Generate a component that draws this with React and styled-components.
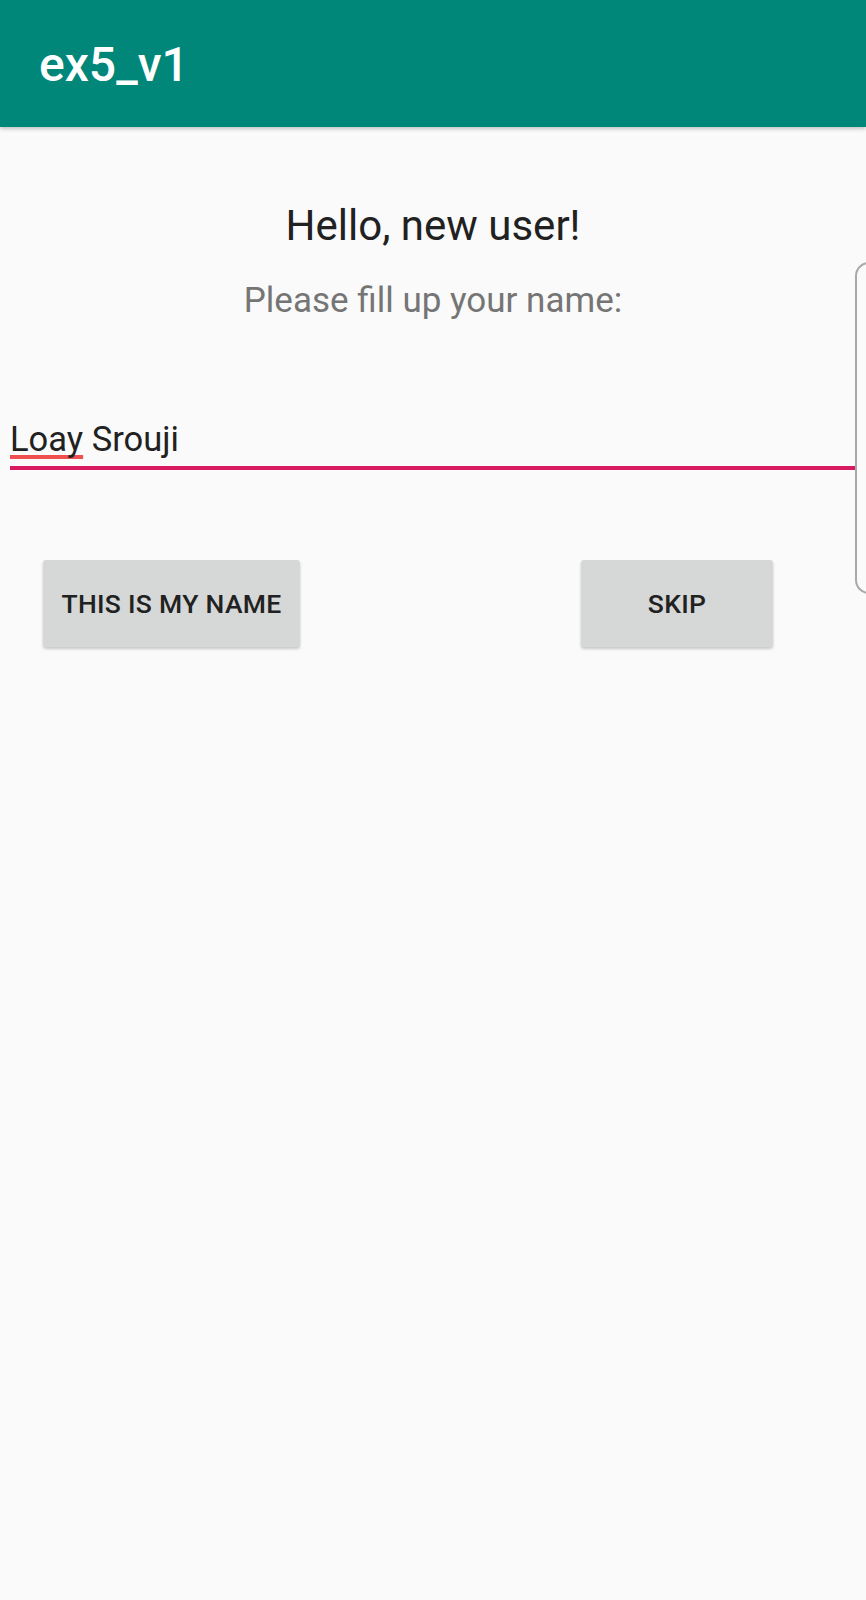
import React from 'react';
import styled, { createGlobalStyle } from 'styled-components';

const GlobalStyle = createGlobalStyle`
  html, body {
    margin: 0;
    padding: 0;
    background: #fafafa;
  }
  body {
    font-family: Roboto, "Liberation Sans", sans-serif;
  }
`;

const Screen = styled.div`
  position: relative;
  min-height: 1600px;
  background: #fafafa;
  overflow: hidden;
`;

const AppBar = styled.header`
  display: flex;
  align-items: center;
  height: 127px;
  padding-left: 39px;
  background: #00877a;
  box-shadow: 0 2px 4px rgba(0, 0, 0, 0.22);
  position: relative;
  z-index: 1;
`;

const AppTitle = styled.h1`
  margin: 0;
  padding-top: 2px;
  font-size: 48px;
  line-height: 1;
  font-weight: 500;
  color: #ffffff;
`;

const Content = styled.main`
  display: flex;
  flex-direction: column;
  padding-top: 74px;
`;

const Greeting = styled.div`
  text-align: center;
  font-size: 42px;
  line-height: 50px;
  color: #212121;
`;

const Prompt = styled.div`
  margin-top: 30px;
  text-align: center;
  font-size: 35px;
  line-height: 40px;
  color: #757575;
`;

const NameField = styled.div`
  margin: 98px 10px 0;
  padding-bottom: 7px;
  border-bottom: 4.5px solid #d81b60;
  font-size: 34.5px;
  line-height: 40px;
  color: #212121;
`;

const Misspelled = styled.span`
  text-decoration: underline;
  text-decoration-color: #ef4f4f;
  text-decoration-thickness: 4px;
  text-underline-offset: 4px;
  text-decoration-skip-ink: none;
`;

const ButtonRow = styled.div`
  display: flex;
  justify-content: space-between;
  margin-top: 90px;
  padding: 0 93px 0 43px;
`;

const Button = styled.button`
  display: flex;
  align-items: center;
  justify-content: center;
  width: ${p => p.$width}px;
  height: 87px;
  padding: 0;
  border: none;
  border-radius: 3px;
  background: #d6d7d7;
  box-shadow: 0 2px 3px rgba(0, 0, 0, 0.2);
  font-family: Roboto, "Liberation Sans", sans-serif;
  font-size: 26.5px;
  font-weight: 500;
  letter-spacing: 0.3px;
  color: #212121;
  text-transform: uppercase;
  cursor: pointer;
`;

const EdgeHandle = styled.div`
  position: absolute;
  top: 262px;
  left: 855px;
  width: 40px;
  height: 332px;
  border: 2px solid #a8a8a8;
  border-radius: 14px;
  background: #fafafa;
  box-sizing: border-box;
`;

export default function App() {
  return (
    <Screen>
      <GlobalStyle />
      <AppBar>
        <AppTitle>ex5_v1</AppTitle>
      </AppBar>
      <Content>
        <Greeting>Hello, new user!</Greeting>
        <Prompt>Please fill up your name:</Prompt>
        <NameField>
          <Misspelled>Loay</Misspelled> Srouji
        </NameField>
        <ButtonRow>
          <Button $width={257}>This is my name</Button>
          <Button $width={192}>Skip</Button>
        </ButtonRow>
      </Content>
      <EdgeHandle />
    </Screen>
  );
}
